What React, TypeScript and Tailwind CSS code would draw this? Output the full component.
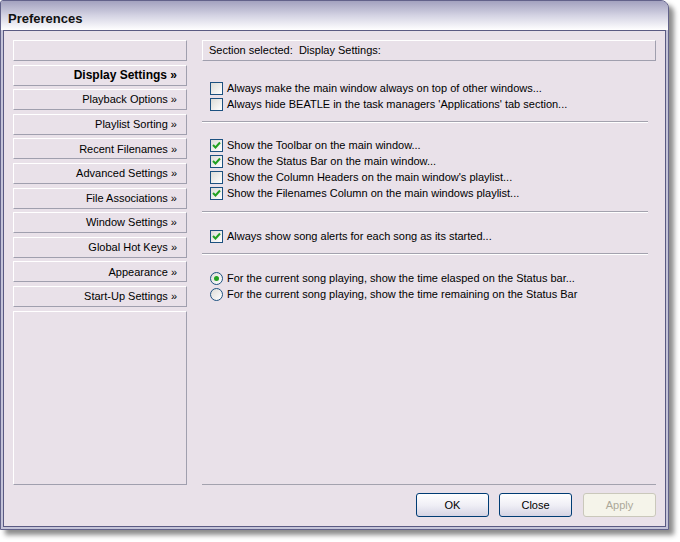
import React from 'react';

const navItems = [
  '',
  'Display Settings »',
  'Playback Options »',
  'Playlist Sorting »',
  'Recent Filenames »',
  'Advanced Settings »',
  'File Associations »',
  'Window Settings »',
  'Global Hot Keys »',
  'Appearance »',
  'Start-Up Settings »',
];

function CheckBox({ checked }: { checked?: boolean }) {
  return (
    <span className="w-[13px] h-[13px] shrink-0 border border-[#1c5180] bg-gradient-to-br from-[#dcdcd7] to-[#ffffff] flex items-center justify-center">
      {checked && (
        <svg width="9" height="9" viewBox="0 0 9 9">
          <path d="M1 4 L3.5 6.5 L8 1.5" fill="none" stroke="#21a121" strokeWidth="2" />
        </svg>
      )}
    </span>
  );
}

function Radio({ checked }: { checked?: boolean }) {
  return (
    <span className="w-[13px] h-[13px] shrink-0 rounded-full border border-[#1c5180] bg-gradient-to-br from-[#dcdcd7] to-[#ffffff] flex items-center justify-center">
      {checked && <span className="w-[5px] h-[5px] rounded-full bg-[#21a121]" />}
    </span>
  );
}

function Row({ children, label }: { children: React.ReactNode; label: string }) {
  return (
    <div className="h-[16px] flex items-center gap-[4px] pl-[8px]">
      {children}
      <span className="whitespace-pre">{label}</span>
    </div>
  );
}

function Separator() {
  return <div className="w-[446px] border-t border-[#a3a2ae] border-b border-b-white" />;
}

function Btn({ label, disabled }: { label: string; disabled?: boolean }) {
  return (
    <button
      className={
        disabled
          ? 'w-[73px] h-[24px] rounded-[3px] border border-[#cac8bb] bg-[#f5f4ea] text-[#aca899]'
          : 'w-[73px] h-[24px] rounded-[3px] border border-[#003c74] bg-gradient-to-b from-[#ffffff] via-[#f0eff6] to-[#d5d4e4] text-black'
      }
    >
      {label}
    </button>
  );
}

export default function App() {
  return (
    <div className="w-[680px] h-[542px] bg-white text-[11px] text-black" style={{ fontFamily: '"Liberation Sans", Arial, sans-serif' }}>
      <div className="w-[669px] h-[530px] flex flex-col border border-[#62628a] rounded-tr-[8px] rounded-tl-[3px] shadow-[5px_5px_5px_rgba(0,0,0,0.45)] overflow-hidden bg-[#c4c3d8]">
        {/* Title bar */}
        <div className="h-[29px] shrink-0 pl-[7px] pt-[6px] flex items-center bg-gradient-to-b from-[#a3a2bf] via-[#d4d3e3] to-[#ffffff] text-[13px] font-bold text-[#111]">
          Preferences
        </div>

        {/* Body frame */}
        <div className="flex-1 px-[2px] pb-[2px] flex">
          <div className="flex-1 border border-[#5a5a82] bg-[#e9e1e9] flex flex-col pl-[9px] pr-[8px] pt-[9px] pb-[7px]">
            <div className="flex gap-[15px] h-[445px]">
              {/* Nav */}
              <div className="w-[174px] flex flex-col gap-[3.6px]">
                {navItems.map((item, i) => (
                  <div
                    key={i}
                    className={
                      'h-[21px] shrink-0 border border-t-white border-l-white border-b-[#a09fae] border-r-[#a09fae] flex items-center justify-end pr-[9px] ' +
                      (i === 1 ? 'font-bold text-[12px]' : '')
                    }
                  >
                    {item}
                  </div>
                ))}
                <div className="flex-1 border border-t-white border-l-white border-b-[#a09fae] border-r-[#a09fae]" />
              </div>

              {/* Right content */}
              <div className="w-[454px] flex flex-col">
                <div className="h-[21px] border border-t-white border-l-white border-b-[#a09fae] border-r-[#a09fae] flex items-center pl-[6px] whitespace-pre">
                  Section selected:  Display Settings:
                </div>

                <div className="mt-[19px]">
                  <Row label="Always make the main window always on top of other windows..."><CheckBox /></Row>
                  <Row label="Always hide BEATLE in the task managers 'Applications' tab section..."><CheckBox /></Row>
                </div>

                <div className="mt-[9px]"><Separator /></div>

                <div className="mt-[14px]">
                  <Row label="Show the Toolbar on the main window..."><CheckBox checked /></Row>
                  <Row label="Show the Status Bar on the main window..."><CheckBox checked /></Row>
                  <Row label="Show the Column Headers on the main window's playlist..."><CheckBox /></Row>
                  <Row label="Show the Filenames Column on the main windows playlist..."><CheckBox checked /></Row>
                </div>

                <div className="mt-[10px]"><Separator /></div>

                <div className="mt-[15px]">
                  <Row label="Always show song alerts for each song as its started..."><CheckBox checked /></Row>
                </div>

                <div className="mt-[9px]"><Separator /></div>

                <div className="mt-[15px]">
                  <Row label="For the current song playing, show the time elasped on the Status bar..."><Radio checked /></Row>
                  <Row label="For the current song playing, show the time remaining on the Status Bar"><Radio /></Row>
                </div>

                <div className="mt-auto w-[454px] border-b border-[#a3a2ae]" />
              </div>
            </div>

            {/* Buttons */}
            <div className="mt-[8px] mr-[1px] flex justify-end">
              <Btn label="OK" />
              <div className="ml-[10px]"><Btn label="Close" /></div>
              <div className="ml-[11px]"><Btn label="Apply" disabled /></div>
            </div>
          </div>
        </div>
      </div>
    </div>
  );
}
